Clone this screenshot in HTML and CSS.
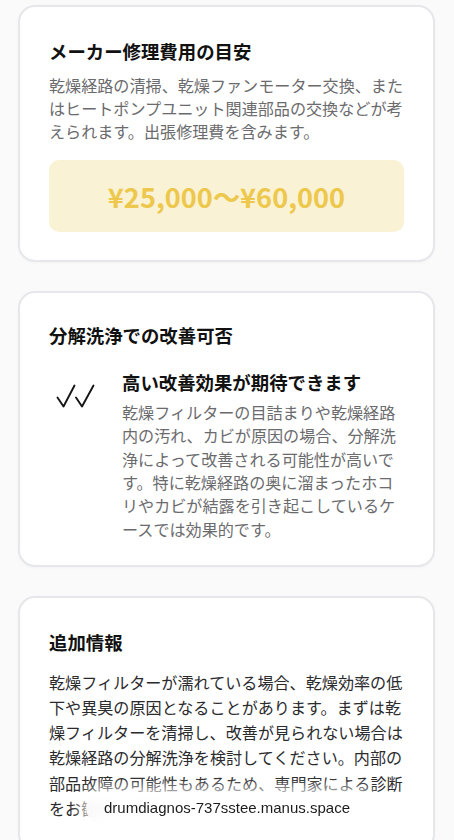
FILE: index.html
```html
<!DOCTYPE html>
<html lang="ja">
<head>
<meta charset="utf-8">
<meta name="viewport" content="width=device-width, initial-scale=1">
<title>修理費用</title>
<link rel="stylesheet" href="styles.css">
</head>
<body>
<main class="page">
  <section class="card card-cost">
    <h2 class="card-title">メーカー修理費用の目安</h2>
    <p class="card-text muted">乾燥経路の清掃、乾燥ファンモーター交換、またはヒートポンプユニット関連部品の交換などが考えられます。出張修理費を含みます。</p>
    <div class="price-box">
      <span class="price">¥25,000〜¥60,000</span>
    </div>
  </section>

  <section class="card card-result">
    <h2 class="card-title">分解洗浄での改善可否</h2>
    <div class="result-row">
      <div class="result-icon">
        <svg class="check-svg" width="40" height="26" viewBox="0 0 40 26" aria-hidden="true">
          <path d="M1.5 14.5 L7.5 23.5 L18.5 2.5" fill="none" stroke="#151515" stroke-width="1.9" stroke-linecap="round" stroke-linejoin="round"/>
          <path d="M20 14.5 L26 23.5 L37.5 2.5" fill="none" stroke="#151515" stroke-width="1.9" stroke-linecap="round" stroke-linejoin="round"/>
        </svg>
      </div>
      <div class="result-body">
        <h3 class="result-title">高い改善効果が期待できます</h3>
        <p class="card-text muted">乾燥フィルターの目詰まりや乾燥経路内の汚れ、カビが原因の場合、分解洗浄によって改善される可能性が高いです。特に乾燥経路の奥に溜まったホコリやカビが結露を引き起こしているケースでは効果的です。</p>
      </div>
    </div>
  </section>

  <section class="card card-info">
    <h2 class="card-title info-title">追加情報</h2>
    <p class="card-text dark">乾燥フィルターが濡れている場合、乾燥効率の低下や異臭の原因となることがあります。まずは乾燥フィルターを清掃し、改善が見られない場合は乾燥経路の分解洗浄を検討してください。内部の部品故障の可能性もあるため、専門家による診断をお勧めします。</p>
  </section>
</main>

<div class="url-bar">drumdiagnos-737sstee.manus.space</div>
</body>
</html>
```

FILE: styles.css
```css
* {
  box-sizing: border-box;
}

html, body {
  margin: 0;
  padding: 0;
}

body {
  background: #fafafa;
  font-family: "Noto Sans CJK JP", "Noto Sans", sans-serif;
  color: #111111;
}

.page {
  display: flex;
  flex-direction: column;
  gap: 29px;
  padding: 5px 19px 40px 18px;
}

.card {
  background: #ffffff;
  border: 2px solid #e6e7ea;
  border-radius: 17px;
  padding: 31px 29px 28px 29px;
  box-shadow: 0 1px 3px rgba(0, 0, 0, 0.03);
}

.card-result {
  padding-top: 29px;
  padding-bottom: 24px;
}

.card-title {
  margin: 0 0 8px 0;
  font-size: 18.4px;
  line-height: 27.6px;
  font-weight: 700;
  color: #111111;
}

.card-text {
  margin: 0;
  font-size: 16.1px;
  line-height: 23.3px;
  font-weight: 400;
}

.muted {
  color: #6b6b6e;
}

.dark {
  color: #2b2b2e;
  line-height: 25.3px;
}

.info-title {
  margin-bottom: 13px;
}

.price-box {
  margin-top: 17px;
  background: #faf2d4;
  border-radius: 10px;
  height: 72px;
  display: flex;
  align-items: center;
  justify-content: center;
}

.price {
  font-size: 27.2px;
  line-height: 36px;
  font-weight: 700;
  color: #edc84c;
}

.card-result .card-title {
  margin-bottom: 19px;
}

.result-row {
  display: flex;
  align-items: flex-start;
  gap: 18px;
}

.result-icon {
  flex: 0 0 55px;
  height: 55px;
  display: flex;
  align-items: center;
  justify-content: center;
}

.check-svg {
  display: block;
  margin-left: -2px;
  margin-top: -2px;
}

.result-body {
  flex: 1;
  min-width: 0;
}

.result-title {
  margin: 0 0 4.5px 0;
  font-size: 18.4px;
  line-height: 27.6px;
  font-weight: 700;
  color: #111111;
}

.url-bar {
  position: fixed;
  left: 86px;
  top: 793px;
  width: 286px;
  height: 30px;
  border-radius: 15px;
  background: rgba(255, 255, 255, 0.92);
  backdrop-filter: blur(6px);
  box-shadow: 0 0 12px 6px rgba(255, 255, 255, 0.75);
  font-family: "Liberation Sans", Arial, sans-serif;
  font-size: 15px;
  line-height: 30px;
  color: #1c1c1e;
  padding-left: 18px;
}
```
